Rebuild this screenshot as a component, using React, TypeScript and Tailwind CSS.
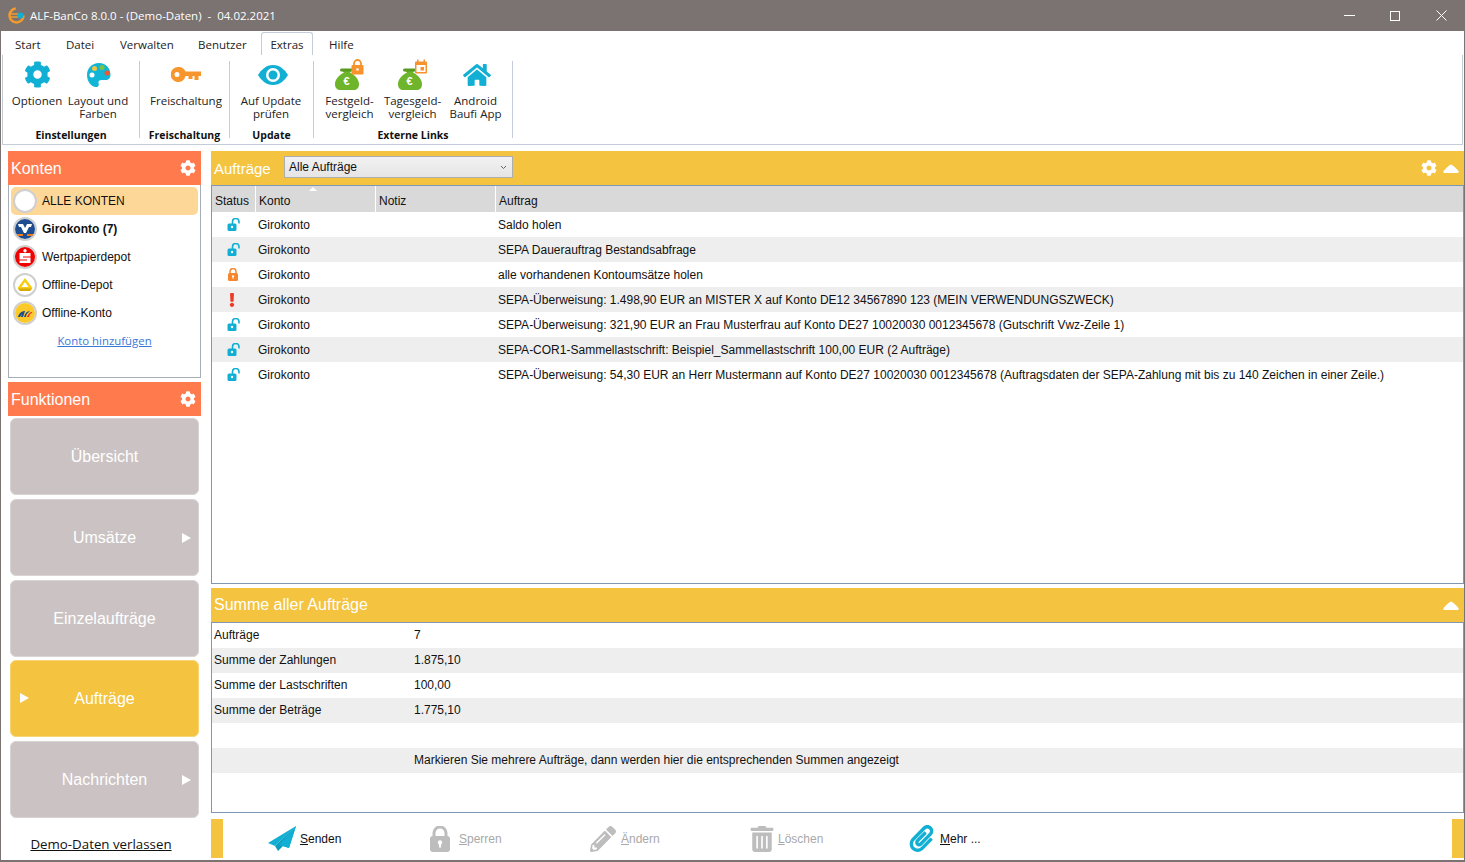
import React from "react";
import { FaCog, FaHome, FaPencilAlt, FaTrashAlt, FaPaperclip, FaExclamation } from "react-icons/fa";

const ui = "font-['Open_Sans','Noto_Sans',sans-serif]";

function Palette() {
  return (
    <svg width="26" height="26" viewBox="0 0 26 26">
      <path d="M13 1C6 1 1 6 1 13c0 6 4 12 9 12 3 0 3-2 2.500-4-.5-2 1-3 3-3h4c3 0 5-2 5-5C24.500 6 20 1 13 1z" fill="#12b5d6" />
      <circle cx="8.500" cy="6.500" r="2.500" fill="#f4c33f" />
      <circle cx="16" cy="5.500" r="2.500" fill="#7cc243" />
      <circle cx="21" cy="11" r="2.500" fill="#f0562d" />
      <circle cx="6" cy="13" r="2.500" fill="#fff" />
    </svg>
  );
}

function KeyIcon() {
  return (
    <svg width="30" height="15" viewBox="0 0 30 15">
      <path fillRule="evenodd" d="M7.500 0a7.500 7.500 0 0 1 7 4.500H30v4.500h-2.500v4h-4v-4h-2v3h-4V9h-3a7.500 7.500 0 1 1-7-9zM6 5a2.500 2.500 0 1 0 0 5 2.500 2.500 0 0 0 0-5z" fill="#f7962d" />
    </svg>
  );
}

function EyeIcon() {
  return (
    <svg width="30" height="20" viewBox="0 0 30 20">
      <path d="M15 0C8 0 3 5 0 10c3 5 8 10 15 10s12-5 15-10C27 5 22 0 15 0z" fill="#12afd4" />
      <circle cx="15" cy="10" r="7" fill="#fff" />
      <circle cx="15" cy="10" r="4.500" fill="#12afd4" />
    </svg>
  );
}

function PlaneIcon() {
  return (
    <svg width="28" height="26" viewBox="0 0 28 26">
      <path d="M28 0L0 17l7 3z" fill="#12afd4" />
      <path d="M28 0L7 20l3 5 5-5 6 2z" fill="#0e9dbf" />
      <path d="M28 0L11 19l10 3z" fill="#12afd4" />
    </svg>
  );
}

function LockIcon({ color, w, h }: { color: string; w: number; h: number }) {
  return (
    <svg width={w} height={h} viewBox="0 0 20 26">
      <path d="M4 11V7a6 6 0 0 1 12 0v4" fill="none" stroke={color} strokeWidth="3" />
      <rect x="0" y="10" width="20" height="16" rx="3" fill={color} />
      <circle cx="10" cy="16.500" r="2.200" fill="#fff" />
      <rect x="9" y="17" width="2" height="4.500" fill="#fff" />
    </svg>
  );
}

function OpenLock() {
  return (
    <svg width="14" height="13" viewBox="0 0 14 13">
      <path d="M5.500 6.500V3.700a3 3 0 0 1 6.500 0V5.500" fill="none" stroke="#12afd4" strokeWidth="1.600" />
      <rect x="0.500" y="5.500" width="9" height="7.500" rx="1.500" fill="#12afd4" />
      <circle cx="5" cy="9" r="1.200" fill="#fff" />
    </svg>
  );
}

function MoneyBag({ badge }: { badge: "lock" | "cal" }) {
  return (
    <svg width="30" height="32" viewBox="0 0 30 32">
      <path d="M6 11h11l-2 2.500c5 2.500 9 7 9 11.500 0 4-2 6-6 6H6c-4 0-6-2-6-6 0-4.500 4-9 9-11.500z" fill="#6fb52c" />
      <rect x="5" y="9.500" width="13" height="3" rx="1.500" fill="#5a9a22" />
      <text x="11.500" y="26" fontSize="11" fontWeight="700" fill="#fff" textAnchor="middle" fontFamily="Liberation Sans, sans-serif">€</text>
      {badge === "lock" ? (
        <g>
          <path d="M19 6V4.500a3.500 3.500 0 0 1 7 0V6" fill="none" stroke="#f7922d" strokeWidth="1.800" />
          <rect x="16.500" y="6" width="12" height="9.500" rx="1" fill="#f7922d" />
          <circle cx="22.500" cy="10.500" r="1.300" fill="#fff" />
        </g>
      ) : (
        <g>
          <rect x="17" y="2.500" width="12" height="12" rx="1" fill="#f7922d" />
          <rect x="19" y="0.500" width="1.500" height="3" fill="#f7922d" />
          <rect x="25.500" y="0.500" width="1.500" height="3" fill="#f7922d" />
          <rect x="18.500" y="6" width="9" height="7" fill="#fff" />
          <rect x="22.500" y="8" width="3.500" height="3.500" fill="#f7922d" />
        </g>
      )}
    </svg>
  );
}

function RibbonButton({ w, icon, l1, l2 }: { w: string; icon: React.ReactNode; l1: string; l2?: string }) {
  return (
    <div className={`${w} flex flex-col items-center shrink-0 -mt-[3px]`}>
      <div className="h-[33px] flex items-center justify-center">{icon}</div>
      <div className="text-[11.5px] leading-[13px] text-[#222] text-center whitespace-nowrap mt-[3px]">
        {l1}
        {l2 ? <br /> : null}
        {l2}
      </div>
    </div>
  );
}

function RibbonGroup({ w, label, children, pl }: { w: string; label: string; children: React.ReactNode; pl: string }) {
  return (
    <div className={`${w} h-[77px] relative flex flex-col border-r border-[#c3ccd8] shrink-0`}>
      <div className={`flex ${pl} h-[70px]`}>{children}</div>
      <div className="absolute left-0 right-0 top-[67px] text-center text-[10.5px] leading-[14px] font-bold text-[#111]">{label}</div>
    </div>
  );
}

function LogoRing({ children }: { children?: React.ReactNode }) {
  return (
    <div className="w-[24px] h-[24px] rounded-full border-[2px] border-[#cfcfcf] bg-white overflow-hidden flex items-center justify-center shrink-0">
      {children}
    </div>
  );
}

const VB = (
  <svg width="20" height="20" viewBox="0 0 20 20">
    <rect width="20" height="20" fill="#1d4c8f" />
    <path d="M3 5h5l2 4 2-4h5l-1 3h-2l-3 6h-2L6 8H4z" fill="#fff" />
    <rect x="2" y="15" width="6" height="2" fill="#f07d19" />
    <rect x="12" y="15" width="6" height="2" fill="#f07d19" />
  </svg>
);
const SP = (
  <svg width="20" height="20" viewBox="0 0 20 20">
    <rect width="20" height="20" fill="#f00000" />
    <circle cx="10" cy="3.800" r="1.700" fill="#fff" />
    <path d="M4.500 6h11v3.500H8v1h7.500v5.500h-11v-2.500H12v-1H4.500z" fill="#fff" />
  </svg>
);
const CB = (
  <svg width="20" height="20" viewBox="0 0 20 20">
    <path d="M10 3l7.500 10L15 16H5l-2.500-3z" fill="#f6cf12" />
    <path d="M10 7l3.500 5h-7z" fill="#fff" />
    <path d="M3 13.500h14L15 16H5z" fill="#d9a90c" />
  </svg>
);
const PB = (
  <svg width="20" height="20" viewBox="0 0 20 20">
    <rect width="20" height="20" fill="#fcc92a" />
    <path d="M3 14c1-4 4-6 7-6l-2 6H6l1-3-2 3z" fill="#1d4c8f" />
    <path d="M9 14c1-4 3-6 6-6l-1 1c-2 1-3 3-3 5z" fill="#1d4c8f" />
    <path d="M12 14c1-3 3-5 5-5v1c-1 0-3 2-3 4z" fill="#e63423" />
  </svg>
);

const orders: [string, string][] = [
  ["u", "Saldo holen"],
  ["u", "SEPA Dauerauftrag Bestandsabfrage"],
  ["l", "alle vorhandenen Kontoumsätze holen"],
  ["e", "SEPA-Überweisung: 1.498,90 EUR an MISTER X auf Konto DE12 34567890 123 (MEIN VERWENDUNGSZWECK)"],
  ["u", "SEPA-Überweisung: 321,90 EUR an Frau Musterfrau auf Konto DE27 10020030 0012345678 (Gutschrift Vwz-Zeile 1)"],
  ["u", "SEPA-COR1-Sammellastschrift: Beispiel_Sammellastschrift 100,00 EUR (2 Aufträge)"],
  ["u", "SEPA-Überweisung: 54,30 EUR an Herr Mustermann auf Konto DE27 10020030 0012345678 (Auftragsdaten der SEPA-Zahlung mit bis zu 140 Zeichen in einer Zeile.)"],
];

const sums: [string, string][] = [
  ["Aufträge", "7"],
  ["Summe der Zahlungen", "1.875,10"],
  ["Summe der Lastschriften", "100,00"],
  ["Summe der Beträge", "1.775,10"],
  ["", ""],
  ["", "Markieren Sie mehrere Aufträge, dann werden hier die entsprechenden Summen angezeigt"],
];

function StatusIcon({ s }: { s: string }) {
  if (s === "u") return <OpenLock />;
  if (s === "l") return <span className="-ml-[3px] flex"><LockIcon color="#f7862d" w={10} h={13} /></span>;
  return <FaExclamation className="text-[#ee3a24] text-[14px] -ml-[4px]" />;
}

function Up() {
  return (
    <svg width="16" height="9" viewBox="0 0 16 9">
      <path d="M8 0.500 C9 0.500 14 5 15.500 7 C16 8 15.500 9 14.500 9 H1.500 C0.500 9 0 8 0.500 7 C2 5 7 0.500 8 0.500z" fill="#fff" />
    </svg>
  );
}

function FnButton({ label, active, right, left, tight }: { label: string; active?: boolean; right?: boolean; left?: boolean; tight?: boolean }) {
  return (
    <div
      className={`h-[77px] mx-[2px] ${tight ? "-mb-[1px]" : ""} rounded-[6px] relative flex items-center justify-center text-[16px] text-white border border-[#d9d3d3] ${
        active ? "bg-[#f4c33f] border-[#f6d473]" : "bg-[#cbc3c3]"
      }`}
    >
      {left ? <span className="absolute left-[9px] top-[32px] w-0 h-0 border-y-[5px] border-y-transparent border-l-[9px] border-l-white" /> : null}
      {label}
      {right ? <span className="absolute right-[7px] top-[33px] w-0 h-0 border-y-[5px] border-y-transparent border-l-[9px] border-l-white" /> : null}
    </div>
  );
}

function Tool({ w, icon, text, iconW, on }: { w: string; icon: React.ReactNode; text: string; iconW: string; on?: boolean }) {
  return (
    <div className={`${w} flex items-center shrink-0 text-[12px] ${on ? "text-[#111]" : "text-[#a9a9a9]"}`}>
      <div className={`${iconW} flex items-center shrink-0`}>{icon}</div>
      <span>
        <span className="underline">{text[0]}</span>
        {text.slice(1)}
      </span>
    </div>
  );
}

export default function App() {
  const accounts: [React.ReactNode, string, boolean][] = [
    [VB, "Girokonto (7)", true],
    [SP, "Wertpapierdepot", false],
    [CB, "Offline-Depot", false],
    [PB, "Offline-Konto", false],
  ];
  return (
    <div className="w-[1465px] h-[862px] overflow-hidden bg-white flex flex-col font-['Liberation_Sans',sans-serif] text-[12px] text-[#111] border-x border-b-[2px] border-x-[#7a7372] border-b-[#7a7372]">
      {/* title bar */}
      <div className={`h-[31px] shrink-0 -mx-px bg-[#7a7372] flex items-center text-white text-[11.5px] ${ui}`}>
        <div className="w-[30px] flex justify-center pl-[2px]">
          <svg width="17" height="17" viewBox="0 0 17 17">
            <circle cx="8.500" cy="8.500" r="7" fill="none" stroke="#f39a2d" strokeWidth="2.500" strokeDasharray="32 12" />
            <path d="M2 7h9M2 10h8" stroke="#f39a2d" strokeWidth="1.500" />
            <circle cx="12.500" cy="8.500" r="3" fill="#12afd4" />
          </svg>
        </div>
        <span className="whitespace-pre">ALF-BanCo 8.0.0 - (Demo-Daten)  -  04.02.2021</span>
        <div className="ml-auto flex items-center">
          <div className="w-[46px] flex justify-center"><span className="block w-[11px] h-px bg-white" /></div>
          <div className="w-[46px] flex justify-center"><span className="block w-[10px] h-[10px] border border-white" /></div>
          <div className="w-[46px] mr-[1px] flex justify-center">
            <svg width="11" height="11" viewBox="0 0 11 11"><path d="M0.500 0.500l10 10M10.500 0.500l-10 10" stroke="#fff" strokeWidth="1" /></svg>
          </div>
        </div>
      </div>

      {/* tabs */}
      <div className={`h-[24px] shrink-0 flex items-end text-[11.5px] text-[#222] ${ui}`}>
        <div className="flex h-[23px] items-center pl-[14px]">
          <span className="w-[51px] pt-[2px]">Start</span>
          <span className="w-[54px] pt-[2px]">Datei</span>
          <span className="w-[78px] pt-[2px]">Verwalten</span>
          <span className="w-[63px] pt-[2px]">Benutzer</span>
          <span className="w-[52px] h-[23px] pt-[2px] flex items-center justify-center border border-b-0 border-[#c3ccd8] rounded-t-[3px] bg-white">Extras</span>
          <span className="ml-[16px] pt-[2px]">Hilfe</span>
        </div>
      </div>

      {/* ribbon */}
      <div className={`h-[90px] shrink-0 ml-[1px] mr-[1px] border-x border-b border-[#c3ccd8] pt-[6px] flex ${ui}`}>
        <RibbonGroup w="w-[137px]" label="Einstellungen" pl="pl-[3px]">
          <RibbonButton w="w-[62px]" icon={<FaCog className="text-[#12afd4] text-[27px]" />} l1="Optionen" />
          <RibbonButton w="w-[60px]" icon={<span className="ml-[2px] flex"><Palette /></span>} l1="Layout und" l2="Farben" />
        </RibbonGroup>
        <RibbonGroup w="w-[90px]" label="Freischaltung" pl="pl-[2px]">
          <RibbonButton w="w-[88px]" icon={<KeyIcon />} l1="Freischaltung" />
        </RibbonGroup>
        <RibbonGroup w="w-[84px]" label="Update" pl="pl-[1px]">
          <RibbonButton w="w-[80px]" icon={<span className="ml-[3px] flex"><EyeIcon /></span>} l1="Auf Update" l2="prüfen" />
        </RibbonGroup>
        <RibbonGroup w="w-[199px]" label="Externe Links" pl="pl-[4px]">
          <RibbonButton w="w-[63px]" icon={<MoneyBag badge="lock" />} l1="Festgeld-" l2="vergleich" />
          <RibbonButton w="w-[63px]" icon={<MoneyBag badge="cal" />} l1="Tagesgeld-" l2="vergleich" />
          <RibbonButton w="w-[63px]" icon={<FaHome className="text-[#12afd4] text-[28px] ml-[2px]" />} l1="Android" l2="Baufi App" />
        </RibbonGroup>
      </div>

      {/* main */}
      <div className="flex-1 min-h-0 flex pt-[6px] pl-[7px]">
        {/* left column */}
        <div className="w-[193px] shrink-0 flex flex-col">
          <div className="h-[34px] bg-[#ff7b4d] flex items-center justify-between pl-[3px] pr-[5px] text-white text-[16px]">
            <span className="pt-[2px]">Konten</span>
            <FaCog className="text-[16px]" />
          </div>
          <div className="h-[193px] border border-t-0 border-[#a9aeb5] pt-[2px] px-[2px]">
            <div className="h-[28px] rounded-[5px] bg-[#fdd797] flex items-center gap-[5px] pl-[2px] text-[12px]">
              <LogoRing />
              <span className="text-[#111]">ALLE KONTEN</span>
            </div>
            {accounts.map(([logo, name, bold]) => (
              <div key={name} className="h-[28px] flex items-center gap-[5px] pl-[2px]">
                <LogoRing>{logo}</LogoRing>
                <span className={bold ? "font-bold" : ""}>{name}</span>
              </div>
            ))}
            <div className={`mt-[5px] text-center text-[11.4px] text-[#3a78d8] underline ${ui}`}>Konto hinzufügen</div>
          </div>
          <div className="h-[34px] mt-[4px] bg-[#ff7b4d] flex items-center justify-between pl-[3px] pr-[5px] text-white text-[16px]">
            <span className="pt-[2px]">Funktionen</span>
            <FaCog className="text-[16px]" />
          </div>
          <div className="flex flex-col gap-[4px] mt-[2px]">
            <FnButton label="Übersicht" />
            <FnButton label="Umsätze" right />
            <FnButton label="Einzelaufträge" tight />
            <FnButton label="Aufträge" active left />
            <FnButton label="Nachrichten" right />
          </div>
          <div className={`mt-[17px] pr-[7px] text-center text-[13.3px] leading-[18px] text-[#111] underline ${ui}`}>Demo-Daten verlassen</div>
        </div>

        {/* right column */}
        <div className="flex-1 min-w-0 ml-[10px] flex flex-col">
          <div className="h-[34px] shrink-0 bg-[#f4c33f] flex items-center pl-[3px] pr-[5px] text-white">
            <span className="w-[70px] pt-[2px] text-[15px]">Aufträge</span>
            <div className="w-[229px] h-[22px] -mt-[2px] border border-[#adadad] bg-gradient-to-b from-[#f2f2f2] to-[#e5e5e5] flex items-center justify-between pl-[4px] pr-[5px] text-[12px] text-[#111]">
              <span>Alle Aufträge</span>
              <svg width="7" height="5" viewBox="0 0 7 5"><path d="M1 1l2.500 2.500L6 1" fill="none" stroke="#666" /></svg>
            </div>
            <div className="ml-auto flex items-center gap-[6px]">
              <FaCog className="text-[16px]" />
              <Up />
            </div>
          </div>
          <div className="h-[399px] shrink-0 border border-[#7f97b2] relative">
            <span className="absolute left-[97px] top-[1px] w-0 h-0 border-x-[4px] border-x-transparent border-b-[4px] border-b-white z-10" />
            <div className="h-[26px] flex items-end bg-[#d9d9d9] text-[12px]">
              <div className="w-[44px] h-full flex items-end pb-[2px] pl-[3px] border-r border-white">Status</div>
              <div className="w-[120px] h-full flex items-end pb-[2px] pl-[3px] border-r border-white">Konto</div>
              <div className="w-[120px] h-full flex items-end pb-[2px] pl-[3px] border-r border-white">Notiz</div>
              <div className="flex-1 h-full flex items-end pb-[2px] pl-[3px]">Auftrag</div>
            </div>
            {orders.map(([s, t], i) => (
              <div key={i} className={`h-[25px] flex items-center ${i % 2 ? "bg-[#eeeeee]" : "bg-white"}`}>
                <div className="w-[44px] flex justify-center"><StatusIcon s={s} /></div>
                <div className="w-[120px] pl-[2px]">Girokonto</div>
                <div className="w-[120px]" />
                <div className="pl-[2px] whitespace-nowrap">{t}</div>
              </div>
            ))}
          </div>
          <div className="h-[34px] mt-[4px] shrink-0 bg-[#f4c33f] flex items-center justify-between pl-[3px] pr-[5px] text-white text-[16px]">
            <span>Summe aller Aufträge</span>
            <Up />
          </div>
          <div className="h-[191px] shrink-0 border border-[#7f97b2]">
            {sums.map(([a, b], i) => (
              <div key={i} className={`h-[25px] pb-[2px] flex items-center ${i % 2 ? "bg-[#eeeeee]" : "bg-white"}`}>
                <div className="w-[202px] pl-[2px] shrink-0">{a}</div>
                <div className="whitespace-nowrap">{b}</div>
              </div>
            ))}
          </div>
          <div className="mt-[6px] h-[39px] shrink-0 flex items-center">
            <div className="w-[12px] h-full bg-[#f4c33f] shrink-0" />
            <div className="flex-1 flex items-center pl-[45px]">
              <Tool w="w-[162px]" iconW="w-[32px]" on icon={<PlaneIcon />} text="Senden" />
              <Tool w="w-[160px]" iconW="w-[29px]" icon={<LockIcon color="#bdbdbd" w={20} h={26} />} text="Sperren" />
              <Tool w="w-[159px]" iconW="w-[31px]" icon={<FaPencilAlt className="text-[#bdbdbd] text-[26px]" />} text="Ändern" />
              <Tool w="w-[159px]" iconW="w-[29px]" icon={<FaTrashAlt className="text-[#bdbdbd] text-[26px]" />} text="Löschen" />
              <Tool w="w-[100px]" iconW="w-[32px]" on icon={<FaPaperclip className="text-[#12afd4] text-[27px]" />} text="Mehr ..." />
            </div>
            <div className="w-[12px] h-full bg-[#f4c33f] shrink-0" />
          </div>
        </div>
      </div>
    </div>
  );
}
